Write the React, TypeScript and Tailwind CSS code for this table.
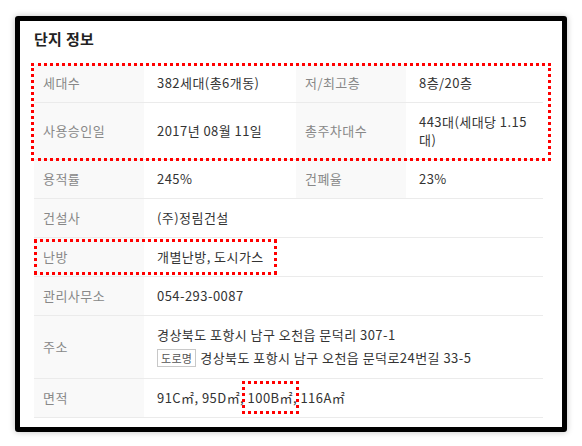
import React from 'react';

const Label = ({ children }: { children: React.ReactNode }) => (
    <div className="flex items-center bg-[#f9f9f9] pl-[9px] py-[10px] text-[#888]">{children}</div>
);

const Value = ({ children }: { children: React.ReactNode }) => (
    <div className="flex items-center pl-[13px] pr-[13px] py-[10px] text-[#333]">{children}</div>
);

const rowCls = 'grid border-b border-[#ebebeb]';
const fourCols = 'grid-cols-[110px_152px_110px_137px]';
const twoCols = 'grid-cols-[110px_399px]';

const App = () => {
    return (
        <div
            className="w-[582px] h-[446px] bg-white pt-[16px] pl-[15px]"
            style={{ fontFamily: "'Noto Sans CJK KR', 'Noto Sans', sans-serif" }}
        >
            <div className="w-[552px] h-[416px] border-[5px] border-black rounded-[3px] bg-white shadow-[0_0_6px_rgba(0,0,0,0.25)] pl-[14px] pr-[19px] pt-[7px]">
                <h2 className="text-[15px] leading-[22px] font-bold text-[#222] mb-[14px] tracking-[0.3px]">단지 정보</h2>
                <div className="text-[13px] leading-[18px] tracking-[0.45px]">
                    <div className="relative">
                        <div className={`${rowCls} ${fourCols}`}>
                            <Label>세대수</Label>
                            <Value>382세대(총6개동)</Value>
                            <Label>저/최고층</Label>
                            <Value>8층/20층</Value>
                        </div>
                        <div className={`${rowCls} ${fourCols}`}>
                            <Label>사용승인일</Label>
                            <Value>2017년 08월 11일</Value>
                            <Label>총주차대수</Label>
                            <Value>443대(세대당 1.15대)</Value>
                        </div>
                        <div className="absolute left-[-3px] right-[-8px] top-[-1px] bottom-[-1px] border-[3px] border-dotted border-[#ff0000]" />
                    </div>
                    <div className={`${rowCls} ${fourCols}`}>
                        <Label>용적률</Label>
                        <Value>245%</Value>
                        <Label>건폐율</Label>
                        <Value>23%</Value>
                    </div>
                    <div className={`${rowCls} ${twoCols}`}>
                        <Label>건설사</Label>
                        <Value>(주)정림건설</Value>
                    </div>
                    <div className={`relative ${rowCls} ${twoCols}`}>
                        <Label>난방</Label>
                        <Value>개별난방, 도시가스</Value>
                        <div className="absolute left-0 top-[1px] bottom-[1px] w-[243px] border-[3px] border-dotted border-[#ff0000]" />
                    </div>
                    <div className={`${rowCls} ${twoCols}`}>
                        <Label>관리사무소</Label>
                        <Value>054-293-0087</Value>
                    </div>
                    <div className={`${rowCls} ${twoCols}`}>
                        <Label>주소</Label>
                        <div className="flex flex-col gap-[4px] pl-[13px] py-[10px] text-[#333]">
                            <span>경상북도 포항시 남구 오천읍 문덕리 307-1</span>
                            <div className="flex items-center gap-[4px] h-[20px]">
                                <span className="border border-[#c8c8c8] bg-white px-[3px] text-[11px] leading-[16px] text-[#555] tracking-[0.3px]">
                                    도로명
                                </span>
                                <span>경상북도 포항시 남구 오천읍 문덕로24번길 33-5</span>
                            </div>
                        </div>
                    </div>
                    <div className={`${rowCls} ${twoCols}`}>
                        <Label>면적</Label>
                        <Value>
                            <span>91C㎡, 95D㎡,&nbsp;</span>
                            <span className="relative">
                                100B㎡
                                <span className="absolute left-[-6px] right-[-6px] top-[-8px] bottom-[-7px] border-[3px] border-dotted border-[#ff0000]" />
                            </span>
                            <span>, 116A㎡</span>
                        </Value>
                    </div>
                </div>
            </div>
        </div>
    );
};

export default App;
